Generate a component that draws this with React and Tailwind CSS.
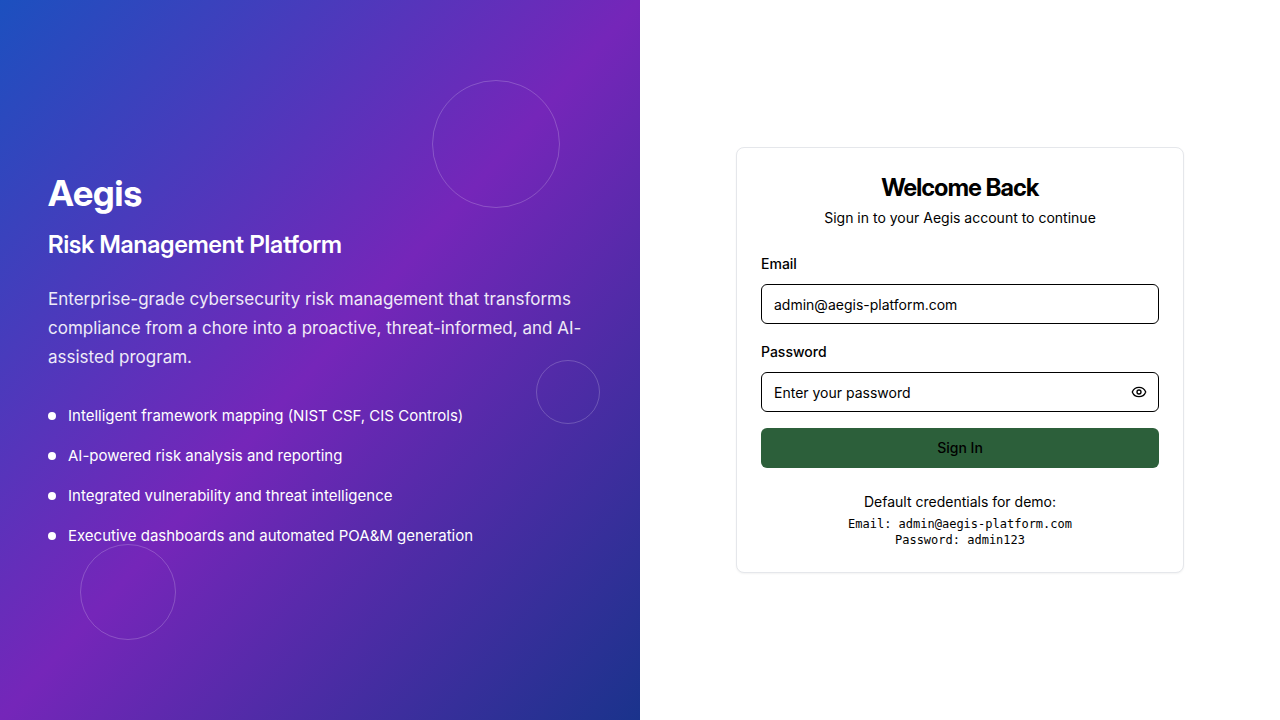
import { useState } from "react";
import { Eye, EyeOff } from "lucide-react";

const features = [
  "Intelligent framework mapping (NIST CSF, CIS Controls)",
  "AI-powered risk analysis and reporting",
  "Integrated vulnerability and threat intelligence",
  "Executive dashboards and automated POA&M generation",
];

function Hero() {
  return (
    <section className="relative flex w-1/2 flex-col justify-center overflow-hidden bg-linear-to-br/srgb from-[#1c50bf] via-[#7526b9] to-[#1a338c] p-12 text-white">
      <h1 className="mb-4 font-['Inter_Display','Inter',sans-serif] text-4xl font-bold">Aegis</h1>
      <h2 className="mb-6 font-['Inter_Display','Inter',sans-serif] text-2xl font-semibold">
        Risk Management Platform
      </h2>
      <p className="mb-8 text-[17px] leading-[29px] opacity-90">
        Enterprise-grade cybersecurity risk management that transforms compliance from a chore into a
        proactive, threat-informed, and AI-assisted program.
      </p>
      <ul className="space-y-4">
        {features.map((feature) => (
          <li key={feature} className="flex items-center gap-3">
            <span className="h-2 w-2 rounded-full bg-white" />
            <span className="text-[15px] leading-6">{feature}</span>
          </li>
        ))}
      </ul>
      <div className="absolute top-20 right-20 h-32 w-32 rounded-full border border-white/20" />
      <div className="absolute bottom-20 left-20 h-24 w-24 rounded-full border border-white/20" />
      <div className="absolute top-1/2 right-10 h-16 w-16 rounded-full border border-white/20" />
    </section>
  );
}

export default function App() {
  const [visible, setVisible] = useState(false);

  return (
    <main className="flex min-h-screen bg-white font-['Inter',sans-serif] text-black">
      <Hero />
      <section className="flex w-1/2 items-center justify-center p-8">
        <div className="w-full max-w-md rounded-lg border border-gray-200 bg-white shadow-xs">
          <header className="flex flex-col gap-1 p-6 text-center">
            <h3 className="font-['Inter_Display','Inter',sans-serif] text-2xl font-bold tracking-tight">
              Welcome Back
            </h3>
            <p className="text-sm">Sign in to your Aegis account to continue</p>
          </header>
          <form className="px-6 pb-6" onSubmit={(event) => event.preventDefault()}>
            <div className="mb-4 flex flex-col gap-2">
              <label htmlFor="email" className="text-sm leading-6 font-medium">Email</label>
              <input
                id="email"
                type="email"
                defaultValue="admin@aegis-platform.com"
                className="h-10 w-full rounded-md border border-black px-3 text-sm"
              />
            </div>
            <div className="mb-4 flex flex-col gap-2">
              <label htmlFor="password" className="text-sm leading-6 font-medium">Password</label>
              <div className="relative">
                <input
                  id="password"
                  type={visible ? "text" : "password"}
                  placeholder="Enter your password"
                  className="h-10 w-full rounded-md border border-black px-3 pr-10 text-sm placeholder:text-black"
                />
                <button
                  type="button"
                  aria-label={visible ? "Hide password" : "Show password"}
                  onClick={() => setVisible(!visible)}
                  className="absolute inset-y-0 right-3 flex items-center"
                >
                  {visible ? <EyeOff size={16} /> : <Eye size={16} />}
                </button>
              </div>
            </div>
            <button type="submit" className="h-10 w-full rounded-md bg-[#2c5f3a] text-sm font-medium">
              Sign In
            </button>
            <div className="mt-6 text-center text-sm">
              <p>Default credentials for demo:</p>
              <p className="mt-1 font-['DejaVu_Sans_Mono',monospace] text-xs">
                Email: admin@aegis-platform.com
                <br />
                Password: admin123
              </p>
            </div>
          </form>
        </div>
      </section>
    </main>
  );
}
